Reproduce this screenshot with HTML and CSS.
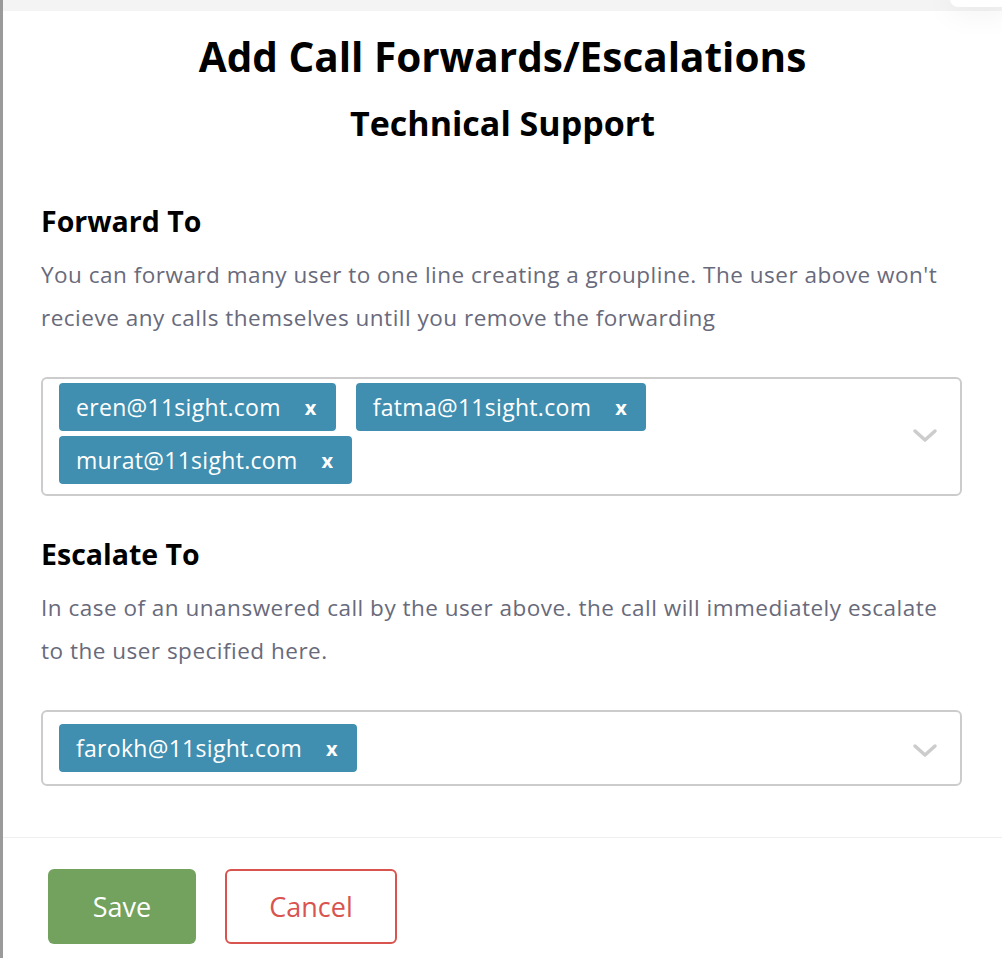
FILE: index.html
```html
<!DOCTYPE html>
<html lang="en">
<head>
  <meta charset="UTF-8" />
  <meta name="viewport" content="width=device-width, initial-scale=1.0"/>
  <title>Add Call Forwards/Escalations</title>
  <link rel="stylesheet" href="styles.css">
</head>
<body>
  <div class="backdrop">
    <div class="corner-card"></div>
    <section class="modal">
      <header class="modal-header">
        <h1>Add Call Forwards/Escalations</h1>
        <h2>Technical Support</h2>
      </header>
      <div class="modal-body">
        <div class="field">
          <h3>Forward To</h3>
          <p>You can forward many user to one line creating a groupline. The user above won't recieve any calls themselves untill you remove the forwarding</p>
          <div class="multi-select multi-select-tall">
            <div class="tags">
              <span class="tag">eren@11sight.com<span class="tag-remove">x</span></span>
              <span class="tag">fatma@11sight.com<span class="tag-remove">x</span></span>
              <span class="tag">murat@11sight.com<span class="tag-remove">x</span></span>
            </div>
            <svg class="chevron" width="26" height="16" viewBox="0 0 26 16">
              <path d="M3 3 L13 12 L23 3" fill="none" stroke="#cccccc" stroke-width="3.5" stroke-linecap="round" stroke-linejoin="round"/>
            </svg>
          </div>
        </div>
        <div class="field">
          <h3>Escalate To</h3>
          <p>In case of an unanswered call by the user above. the call will immediately escalate to the user specified here.</p>
          <div class="multi-select">
            <div class="tags">
              <span class="tag">farokh@11sight.com<span class="tag-remove">x</span></span>
            </div>
            <svg class="chevron" width="26" height="16" viewBox="0 0 26 16">
              <path d="M3 3 L13 12 L23 3" fill="none" stroke="#cccccc" stroke-width="3.5" stroke-linecap="round" stroke-linejoin="round"/>
            </svg>
          </div>
        </div>
      </div>
      <footer class="modal-footer">
        <button class="btn btn-save">Save</button>
        <button class="btn btn-cancel">Cancel</button>
      </footer>
    </section>
  </div>
</body>
</html>
```

FILE: styles.css
```css
* {
  box-sizing: border-box;
  font-family: "Open Sans", "Noto Sans", sans-serif;
}

body {
  margin: 0;
  padding: 0;
  background-color: #f4f4f4;
}

.backdrop {
  position: relative;
  height: 958px;
  padding-top: 11px;
  border-left: 3px solid #9a9a9a;
  overflow: hidden;
}

.corner-card {
  position: absolute;
  top: -10px;
  right: -10px;
  width: 62px;
  height: 17px;
  background-color: white;
  border-radius: 8px;
  box-shadow: 0 4px 30px rgba(0, 0, 0, 0.08);
}

.modal {
  background-color: white;
  height: 100%;
}

.modal-header {
  padding-top: 24px;
  text-align: center;
  color: #000;
}

.modal-header h1 {
  margin: 0;
  font-size: 40.5px;
  line-height: 44px;
  font-weight: 700;
}

.modal-header h2 {
  margin: 24px 0 0 0;
  font-size: 34px;
  line-height: 40px;
  font-weight: 700;
}

.modal-body {
  padding: 0 40px 51px 38px;
  border-bottom: 1px solid #efefef;
}

.field h3 {
  margin: 61px 0 0 0;
  font-size: 28.5px;
  line-height: 34px;
  font-weight: 700;
  color: #000;
}

.field + .field h3 {
  margin-top: 41px;
}

.field p {
  margin: 15px 0 0 0;
  font-size: 22.5px;
  line-height: 43px;
  letter-spacing: 0.5px;
  color: #686a7b;
}

.multi-select {
  margin-top: 38px;
  border: 2px solid #cccccc;
  border-radius: 6px;
  padding: 12px 22px 7px 16px;
  display: flex;
  align-items: center;
  justify-content: space-between;
}

.multi-select-tall {
  padding-top: 4px;
  padding-bottom: 5px;
}

.tags {
  display: flex;
  flex-wrap: wrap;
}

.tag {
  display: inline-flex;
  align-items: center;
  height: 48px;
  margin: 0 20px 5px 0;
  padding: 0 19px 0 17px;
  background-color: #418fb0;
  color: white;
  font-size: 23px;
  letter-spacing: 0.3px;
  border-radius: 4px;
}

.tag-remove {
  margin-left: 24px;
  font-size: 20px;
  font-weight: 700;
}

.chevron {
  flex-shrink: 0;
}

.modal-footer {
  display: flex;
  gap: 29px;
  padding: 31px 0 0 45px;
}

.btn {
  height: 75px;
  border-radius: 6px;
  font-size: 27px;
  cursor: pointer;
}

.btn-save {
  width: 148px;
  background-color: #72a25e;
  border: none;
  color: white;
}

.btn-cancel {
  width: 172px;
  background-color: white;
  border: 2px solid #d9534f;
  color: #d9534f;
}
```
